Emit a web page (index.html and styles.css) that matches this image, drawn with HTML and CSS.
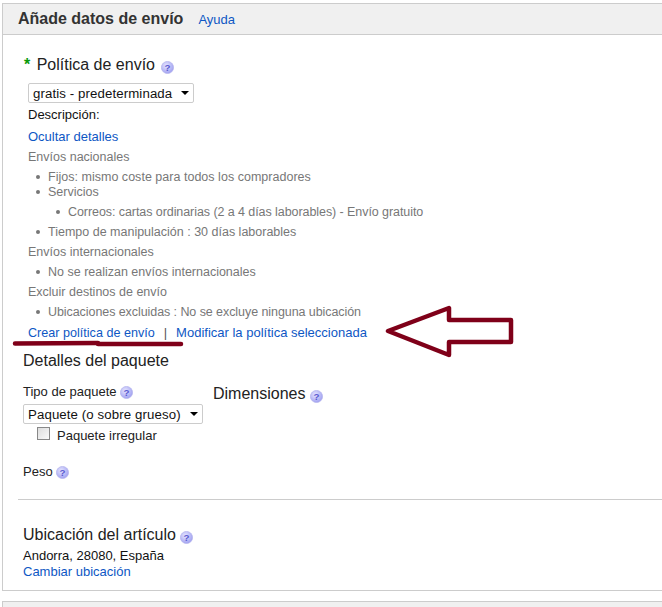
FILE: index.html
```html
<!DOCTYPE html>
<html lang="es">
<head>
<meta charset="utf-8">
<title>Añade datos de envío</title>
<link rel="stylesheet" href="styles.css">
</head>
<body>
<section class="panel">
  <header class="panel-head">
    <h1>Añade datos de envío</h1>
    <a href="#" class="link">Ayuda</a>
  </header>
  <div class="policy">
    <h2 class="policy-title"><span class="req">*</span> Política de envío <svg class="help help-title" viewBox="0 0 12 12"><use href="#q"/></svg></h2>
    <div class="select select-policy"><span>gratis - predeterminada</span><i class="caret"></i></div>
    <div class="row dark desc">Descripción:</div>
    <div class="row toggle"><a href="#" class="link">Ocultar detalles</a></div>
    <div class="row muted">Envíos nacionales</div>
    <ul class="list">
      <li class="tight">Fijos: mismo coste para todos los compradores</li>
      <li>Servicios
        <ul class="sub"><li>Correos: cartas ordinarias (2 a 4 días laborables) - Envío gratuito</li></ul>
      </li>
      <li>Tiempo de manipulación : 30 días laborables</li>
    </ul>
    <div class="row muted">Envíos internacionales</div>
    <ul class="list"><li>No se realizan envíos internacionales</li></ul>
    <div class="row muted">Excluir destinos de envío</div>
    <ul class="list"><li class="snug">Ubicaciones excluidas : No se excluye ninguna ubicación</li></ul>
    <div class="row actions"><a href="#" class="link create">Crear política de envío</a><span class="sep">|</span><a href="#" class="link">Modificar la política seleccionada</a></div>
  </div>
  <div class="package">
    <h2 class="section-title">Detalles del paquete</h2>
    <div class="pack-cols">
      <div class="pack-type">
        <div class="label">Tipo de paquete <svg class="help" viewBox="0 0 12 12"><use href="#q"/></svg></div>
        <div class="select select-pack"><span>Paquete (o sobre grueso)</span><i class="caret"></i></div>
        <label class="check"><i class="box"></i>Paquete irregular</label>
      </div>
      <div class="dims">Dimensiones <svg class="help help-title" viewBox="0 0 12 12"><use href="#q"/></svg></div>
    </div>
    <div class="label weight">Peso <svg class="help" viewBox="0 0 12 12"><use href="#q"/></svg></div>
  </div>
  <hr class="rule">
  <div class="location">
    <h2 class="section-title">Ubicación del artículo <svg class="help help-title" viewBox="0 0 12 12"><use href="#q"/></svg></h2>
    <div class="dark addr">Andorra, 28080, España</div>
    <a href="#" class="link">Cambiar ubicación</a>
  </div>
</section>
<div class="next-panel"></div>

<svg class="annot" width="662" height="607" viewBox="0 0 662 607" fill="none" stroke="#7f0019" stroke-width="4.500" stroke-linejoin="round" stroke-linecap="round">
  <path d="M388 331 L449 308 L449 320 L511 320 L511 342 L449 342 L449 355 Z"/>
  <path d="M15 343.500 L98 343"/>
  <path d="M98 344 L181 344"/>
</svg>
<svg class="defs" width="0" height="0">
  <defs>
    <radialGradient id="qg" cx="0.4" cy="0.35" r="0.7"><stop offset="0" stop-color="#e6e6ff"/><stop offset="1" stop-color="#9c9cf0"/></radialGradient>
    <g id="q"><circle cx="6" cy="6" r="5.600" fill="url(#qg)" stroke="#b4b4ec" stroke-width=".7"/><text x="6" y="9.300" text-anchor="middle" class="q-mark">?</text></g>
  </defs>
</svg>
</body>
</html>
```
FILE: styles.css
```css
* { box-sizing: border-box; }
html, body { margin: 0; padding: 0; background: #fff; }
body {
  width: 662px;
  height: 607px;
  overflow: hidden;
  padding-top: 3px;
  font-family: "Liberation Sans", Arial, sans-serif;
  font-size: 13px;
  color: #000;
  position: relative;
}
a { text-decoration: none; }
.link { color: #0e57c4; }
.create { font-size: 12.600px; }
.panel {
  margin-left: 2px;
  height: 588px;
  border: solid #ccc;
  border-width: 1px 0 1px 1px;
}
.panel-head {
  height: 31px;
  background: #f0f0f0;
  border-bottom: 1px solid #ccc;
  display: flex;
  align-items: center;
  padding-left: 15px;
  gap: 15px;
}
.panel-head h1 {
  margin: 0;
  font-size: 16px;
  color: #333;
}
.policy { padding: 20px 0 0 21px; }
h2 { margin: 0; font-weight: normal; font-size: 16px; color: #222; }
.policy-title { height: 22px; line-height: 20px; }
.policy-title .help { margin-left: 2px; }
.req { color: #0a9a0a; font-weight: bold; margin-right: 2px; }
.help { width: 13px; height: 13px; vertical-align: -3px; }
.help-title { vertical-align: -4px; }
.q-mark { font: bold 9px "Liberation Sans", sans-serif; fill: #5a5ad0; }
.select {
  display: flex;
  align-items: center;
  justify-content: space-between;
  height: 20px;
  background: #fff;
  border: 1px solid #ccc;
  border-radius: 2px;
  padding: 0 4px;
  color: #111;
  font-size: 13.250px;
  letter-spacing: .1px;
}
.select-policy { width: 166px; margin: 6px 0 0 4px; }
.select-pack { width: 180px; }
.caret {
  width: 0; height: 0;
  border: 4px solid transparent;
  border-top: 4px solid #000;
  border-bottom: 0;
}
.row { height: 20px; line-height: 20px; margin-left: 4px; }
.desc { margin-top: 2px; }
.toggle { margin-top: 2px; }
.dark { color: #111; }
.muted { color: #777; font-size: 12.500px; }
.list { list-style: none; margin: 0 0 0 24px; padding: 0; color: #777; line-height: 20px; font-size: 12.500px; }
.list li { position: relative; }
.list li.tight { height: 15px; letter-spacing: .02px; }
.list li.snug { letter-spacing: -.07px; }
.list li::before {
  content: "";
  position: absolute;
  left: -12px; top: 8px;
  width: 4px; height: 4px;
  border-radius: 50%;
  background: #777;
}
.sub { list-style: none; margin: 0 0 0 20px; padding: 0; letter-spacing: -.07px; }
.row.actions { height: 21px; margin-top: 1px; }
.sep { margin: 0 9px; color: #555; }
.package { padding: 7px 0 0 20px; }
.section-title { height: 20px; line-height: 20px; }
.pack-cols { display: flex; gap: 10px; margin-top: 11px; }
.pack-type { width: 180px; }
.label { color: #222; height: 20px; line-height: 20px; }
.pack-type .select { margin-top: 2px; }
.check { display: flex; align-items: center; height: 20px; margin-top: 1px; padding-left: 14px; color: #222; }
.box {
  width: 13px; height: 13px;
  margin: -3px 7px 0 0;
  border: 1px solid #888;
  background: linear-gradient(135deg, #ddd, #fafafa);
}
.dims { font-size: 16px; color: #222; margin-top: 3px; }
.weight { margin-top: 17px; }
.rule { margin: 17px 0 0 15px; border: 0; border-top: 1px solid #ccc; }
.location { padding: 25px 0 0 20px; }
.addr { height: 19px; line-height: 22px; }
.next-panel {
  margin: 10px 0 0 2px;
  height: 10px;
  background: #f0f0f0;
  border-top: 1px solid #ccc;
  border-left: 1px solid #ccc;
}
.annot { position: absolute; left: 0; top: 0; pointer-events: none; }
.defs { position: absolute; }
```
